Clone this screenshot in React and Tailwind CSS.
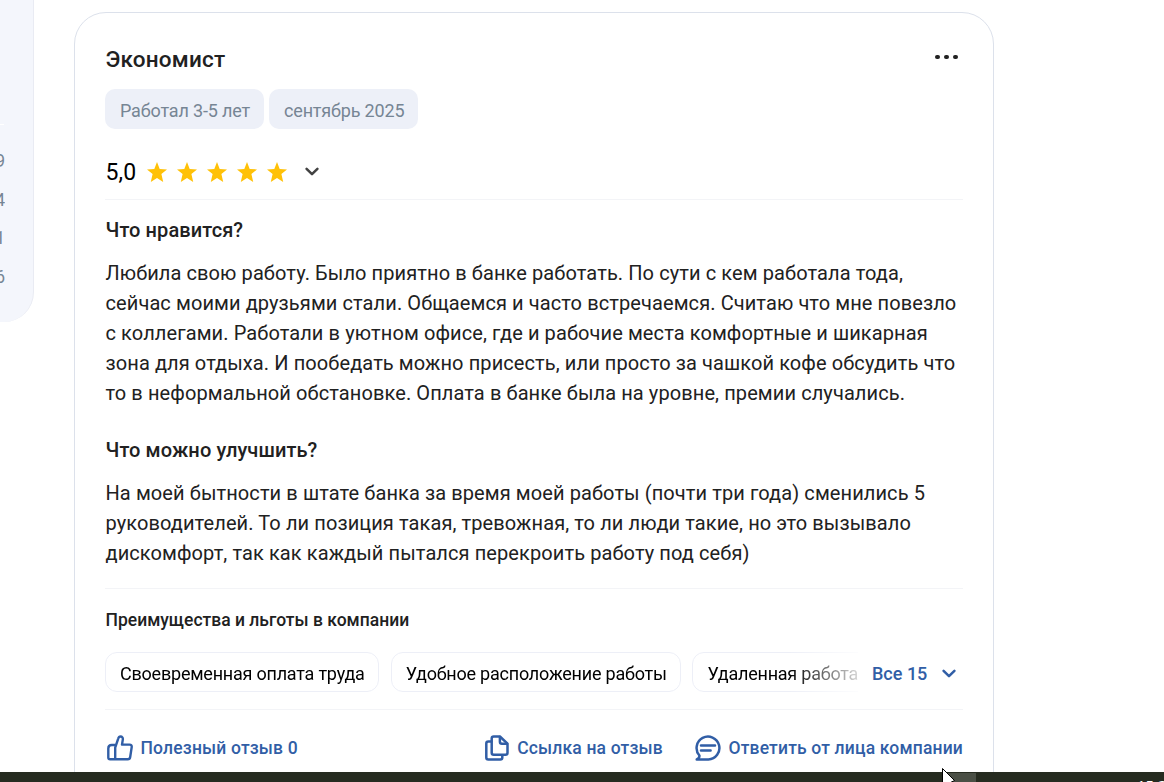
import React from 'react';

const BENEFITS = [
    { label: 'Своевременная оплата труда', width: 'w-[274px]' },
    { label: 'Удобное расположение работы', width: 'w-[290px]' },
    { label: 'Удаленная работа', width: 'w-[180px]' },
];

const LIKES = [
    'Любила свою работу. Было приятно в банке работать. По сути с кем работала тода,',
    'сейчас моими друзьями стали. Общаемся и часто встречаемся. Считаю что мне повезло',
    'с коллегами. Работали в уютном офисе, где и рабочие места комфортные и шикарная',
    'зона для отдыха. И пообедать можно присесть, или просто за чашкой кофе обсудить что',
    'то в неформальной обстановке. Оплата в банке была на уровне, премии случались.',
];

const IMPROVEMENTS = [
    'На моей бытности в штате банка за время моей работы (почти три года) сменились 5',
    'руководителей. То ли позиция такая, тревожная, то ли люди такие, но это вызывало',
    'дискомфорт, так как каждый пытался перекроить работу под себя)',
];

const Star = () => (
    <svg width="20" height="20" viewBox="0 0 20 20" fill="#ffc107" className="shrink-0">
        <path d="M10 0l2.7 6.9 7.3.5-5.6 4.7 1.8 7.9-6.2-4-6.2 4 1.8-7.9L0 7.4l7.3-.5z" />
    </svg>
);

const Chevron = ({ className }) => (
    <svg width="14" height="9" viewBox="0 0 14 9" fill="none" stroke="currentColor" strokeWidth="2.5" strokeLinecap="round" strokeLinejoin="round" className={className}>
        <path d="M1.6 1.8L7 7.2l5.4-5.4" />
    </svg>
);

const ThumbIcon = () => (
    <svg width="26" height="26" viewBox="0 0 26 26" fill="none" stroke="currentColor" strokeWidth="2.4" strokeLinejoin="round" strokeLinecap="round" className="shrink-0">
        <path d="M8.2 24.2V12.6L11.2 3.6C11.6 2.3 12.4 1.5 13.5 1.5c1.6 0 2.6 1.4 2.3 3.1L15 9.6h7.6c1.5 0 2.3 1.1 2.1 2.5l-1.5 9.9c-.2 1.4-1.2 2.2-2.5 2.2H3.1c-1.2 0-1.8-.7-1.8-1.8v-9c0-2.2 1.3-3.4 3.5-3.4h3.6" />
    </svg>
);

const CopyIcon = () => (
    <svg width="24" height="26" viewBox="0 0 24 26" fill="none" stroke="currentColor" strokeWidth="2.5" strokeLinejoin="round" strokeLinecap="round" className="shrink-0">
        <path d="M8.7 1.5h6.2l7.6 7.2v9c0 1.2-.8 2-2 2H8.7c-1.2 0-2-.8-2-2V3.5c0-1.2.8-2 2-2z" />
        <path d="M14.9 2v4.7c0 1.2.8 2 2 2h5.1" />
        <path d="M6.2 6.4H3.3c-1.2 0-2 .8-2 2v14c0 1.2.8 2 2 2h12c1.2 0 2-.8 2-2v-2.2" />
    </svg>
);

const ReplyIcon = () => (
    <svg width="26" height="26" viewBox="0 0 26 26" fill="none" stroke="currentColor" strokeWidth="2.5" strokeLinejoin="round" strokeLinecap="round" className="shrink-0">
        <path d="M4.4 20.5A11.4 11.4 0 1 1 13.4 24.4H1.7c2-.8 2.9-2.1 2.7-3.9z" />
        <path d="M6 10.6h14M6 15.4h9.6" />
    </svg>
);

const Paragraph = ({ lines, className }) => (
    <p className={`pl-[0.5px] text-[20px] leading-[30px] tracking-[0.095px] whitespace-nowrap ${className}`}>
        {lines.map((line) => (
            <span key={line} className="block">{line}</span>
        ))}
    </p>
);

const Sidebar = () => (
    <aside className="h-[322px] w-[34px] shrink-0 rounded-br-[30px] border-r border-[#e9ebf3] bg-[#f4f6fc] text-[17.5px] text-[#768594]">
        <div className="h-[125px] w-1 border-b border-white" />
        <div className="flex w-[5px] flex-col items-end overflow-hidden pt-[17px] leading-[38.5px]">
            <span>9</span>
            <span>4</span>
            <span>1</span>
            <span>6</span>
        </div>
    </aside>
);

const ReviewCard = () => (
    <article className="mt-3 ml-10 h-[800px] w-[920px] shrink-0 rounded-[32px] border border-[#dce1eb] px-[30px]">
        <header className="flex h-[76px] items-start justify-between pt-[31px]">
            <h2 className="pl-[0.5px] text-[22.5px] leading-[30px] font-medium tracking-[0.2px]">Экономист</h2>
            <button className="mt-[11px] mr-[5px] flex gap-1">
                <span className="h-1 w-[5px] rounded-full bg-[#212121]" />
                <span className="h-1 w-[5px] rounded-full bg-[#212121]" />
                <span className="h-1 w-[5px] rounded-full bg-[#212121]" />
            </button>
        </header>

        <div className="flex gap-[5px] text-[18px] tracking-[-0.16px] text-[#768594]">
            <span className="flex h-10 w-[159px] items-center rounded-[10px] bg-[#edf0f8] pt-[3px] pl-[15px] whitespace-nowrap">Работал 3-5 лет</span>
            <span className="flex h-10 w-[149px] items-center rounded-[10px] bg-[#edf0f8] pt-[3px] pl-[15px] whitespace-nowrap">сентябрь 2025</span>
        </div>

        <div className="flex h-[71px] items-center border-b border-[#f3f4f7] pt-[15px]">
            <span className="w-[42px] pt-[2px] pl-[0.5px] text-[23px] leading-[30px] tracking-[0.1px] text-black">5,0</span>
            <div className="flex gap-[10px]">
                <Star />
                <Star />
                <Star />
                <Star />
                <Star />
            </div>
            <Chevron className="ml-[18px] text-[#424242]" />
        </div>

        <h3 className="mt-[15px] pl-[0.5px] text-[20px] leading-[30px] font-medium tracking-[0.1px]">Что нравится?</h3>
        <Paragraph lines={LIKES} className="mt-[13px]" />
        <h3 className="mt-[27px] pl-[0.5px] text-[20px] leading-[30px] font-medium tracking-[0.1px]">Что можно улучшить?</h3>
        <Paragraph lines={IMPROVEMENTS} className="mt-[13px]" />

        <section className="mt-5 h-[122px] border-y border-[#f3f4f7] pt-[19px]">
            <h4 className="pl-[0.5px] text-[17.5px] leading-6 font-medium">Преимущества и льготы в компании</h4>
            <div className="mt-5 flex h-10 items-center">
                <div className="flex w-[753px] shrink-0 overflow-hidden [mask-image:linear-gradient(to_right,black_684px,transparent_766px)]">
                    {BENEFITS.map(({ label, width }) => (
                        <span key={label} className={`${width} mr-[11.7px] flex h-10 shrink-0 items-center rounded-[12px] border border-[#edeff7] pt-[3px] pl-[14px] text-[18px] tracking-[-0.22px] whitespace-nowrap text-black`}>
                            {label}
                        </span>
                    ))}
                </div>
                <button className="ml-[14px] flex items-center pt-[3px] text-[18px] font-medium text-[#315ea6]">
                    <span className="w-[70px] text-left">Все 15</span>
                    <Chevron />
                </button>
            </div>
        </section>

        <footer className="flex h-[76px] items-center text-[17.5px] font-medium tracking-[0.17px] whitespace-nowrap text-[#315ea6]">
            <button className="ml-[2px] flex items-center gap-[7.5px]">
                <ThumbIcon />
                Полезный отзыв 0
            </button>
            <button className="ml-auto flex items-center gap-2">
                <CopyIcon />
                Ссылка на отзыв
            </button>
            <button className="ml-8 flex items-center gap-[7.5px]">
                <ReplyIcon />
                Ответить от лица компании
            </button>
        </footer>
    </article>
);

const Taskbar = () => (
    <div className="relative flex h-[10px] justify-end bg-[#262b20]">
        <div className="mr-[188px] h-[9px] w-[33px] self-end bg-[#4a4f45]" />
        <span className="absolute top-[6px] left-[1137px] font-['Open_Sans'] text-[15px] leading-[15px] text-white">15:27</span>
        <svg width="17" height="14" viewBox="0 0 17 14" className="absolute -top-[4px] left-[941px]">
            <path d="M1.5.5v20l4-4 8-4z" fill="#fff" stroke="#000" />
        </svg>
    </div>
);

export default function App() {
    return (
        <div className="flex h-[782px] w-[1164px] flex-col overflow-hidden bg-white font-['Roboto',sans-serif] text-[#212121]">
            <main className="flex h-[772px] shrink-0 overflow-hidden">
                <Sidebar />
                <ReviewCard />
            </main>
            <Taskbar />
        </div>
    );
}
